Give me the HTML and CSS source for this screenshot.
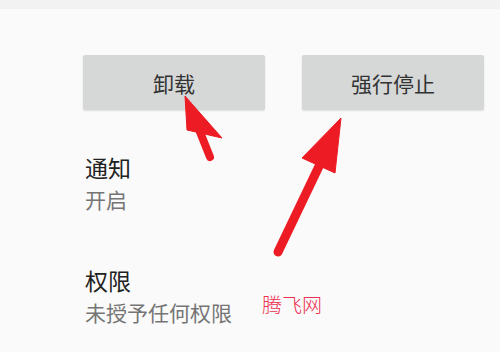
FILE: index.html
```html
<!DOCTYPE html>
<html lang="zh">

<head>
  <meta charset="UTF-8" />
  <meta name="viewport" content="width=device-width, initial-scale=1.0" />
  <title>应用信息</title>
  <link rel="stylesheet" href="styles.css">
</head>

<body>
  <div class="page">
    <div class="top-bar"></div>
    <div class="actions">
      <button class="btn">卸载</button>
      <button class="btn">强行停止</button>
    </div>
    <div class="item">
      <h3>通知</h3>
      <p>开启</p>
    </div>
    <div class="item item-perm">
      <h3>权限</h3>
      <p>未授予任何权限</p>
    </div>

    <!-- 标注箭头 -->
    <svg class="arrows" width="500" height="352" viewBox="0 0 500 352">
      <g fill="#ed1c24" stroke="#ed1c24" stroke-linejoin="round">
        <polygon points="185,96 187,130 222,138" />
        <line x1="200" y1="132" x2="210" y2="157" stroke-width="8" stroke-linecap="round" />
        <polygon points="341,118 302,158 335,173" />
        <line x1="322" y1="160" x2="278" y2="252" stroke-width="9" stroke-linecap="round" />
      </g>
    </svg>
    <div class="mark">腾飞网</div>
  </div>
</body>

</html>
```

FILE: styles.css
```css
* {
  margin: 0;
  padding: 0;
  box-sizing: border-box;
}

body {
  background: #fafafa;
  font-family: "Noto Sans CJK SC", "Noto Sans", sans-serif;
}

.page {
  position: relative;
  width: 500px;
  height: 352px;
  overflow: hidden;
}

.top-bar {
  height: 9px;
  background: #f2f2f2;
}

.actions {
  display: flex;
  gap: 37px;
  padding: 46px 0 0 83px;
}

.btn {
  width: 182px;
  height: 55px;
  border: none;
  border-radius: 2px;
  background: #d6d7d7;
  box-shadow: 0 1px 2px rgba(0, 0, 0, 0.12);
  font-family: inherit;
  font-size: 21px;
  color: #333;
}

.item {
  padding: 42px 0 0 85px;
}

.item h3 {
  font-size: 23px;
  font-weight: normal;
  line-height: 30px;
  color: #222;
}

.item p {
  font-size: 21px;
  line-height: 34px;
  color: #757575;
}

.item-perm {
  padding-top: 49px;
}

.arrows {
  position: absolute;
  left: 0;
  top: 0;
}

.mark {
  position: absolute;
  left: 262px;
  top: 290px;
  font-size: 20px;
  font-weight: 300;
  color: #ec3050;
}
```
